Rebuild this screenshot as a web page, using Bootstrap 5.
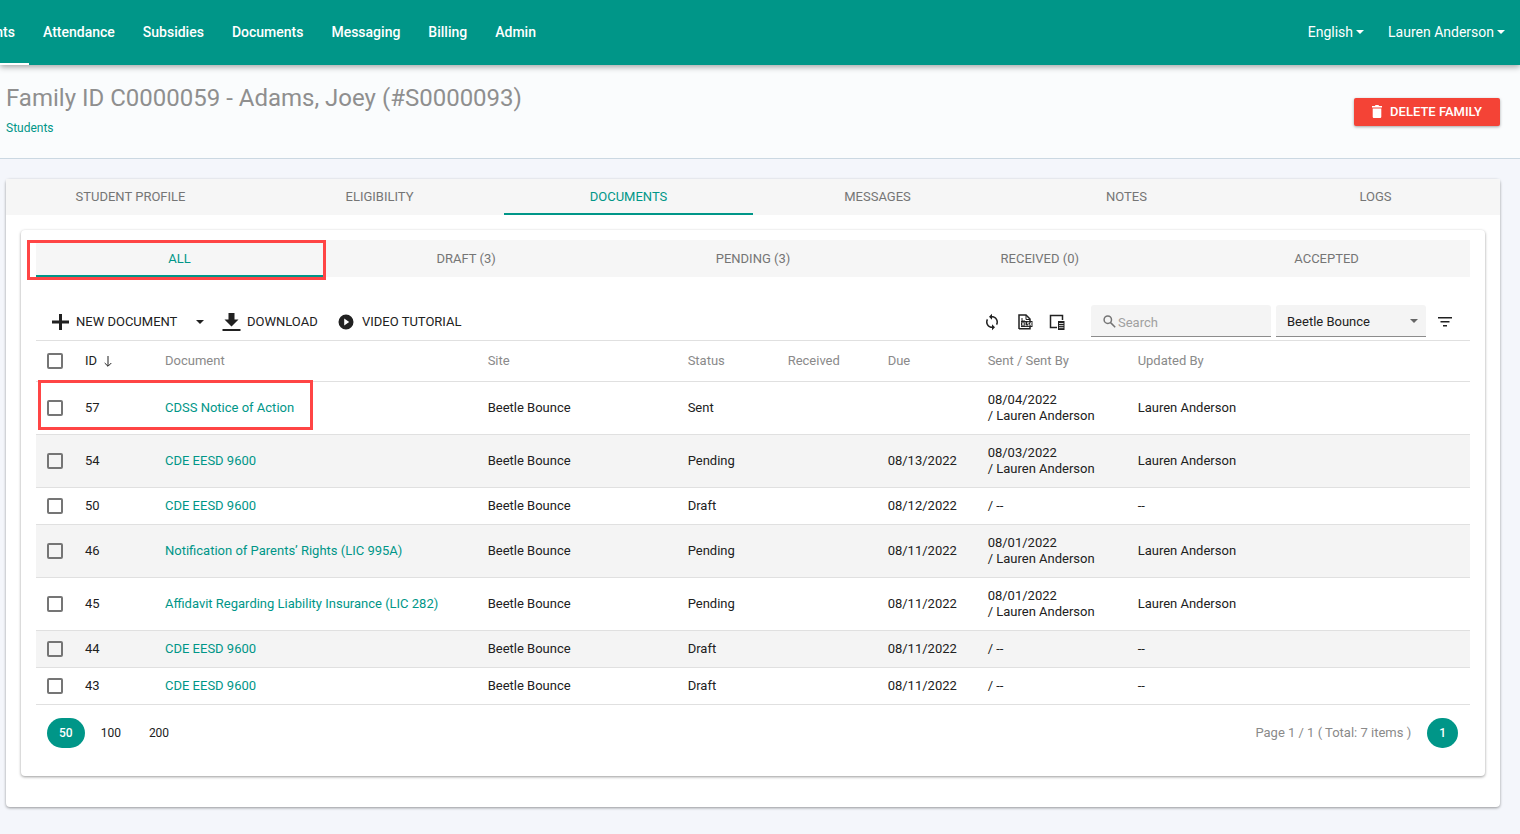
<!DOCTYPE html>
<html lang="en">
<head>
<meta charset="utf-8">
<meta name="viewport" content="width=device-width, initial-scale=1">
<title>Family documents</title>
<link rel="stylesheet" href="https://cdn.jsdelivr.net/npm/bootstrap@5.3.0/dist/css/bootstrap.min.css">
<style>
  :root { --teal: #009688; --ink: #212121; --soft: #757575; --line: #e0e0e0; }
  body { font-family: Roboto, "Liberation Sans", sans-serif; font-size: 13px; line-height: 16px; color: var(--ink); background: #f4f6fb; }
  a { color: var(--teal); text-decoration: none; }
  svg { display: block; fill: currentColor; flex: none; }
  .topbar { background: var(--teal); height: 65px; box-shadow: 0 2px 6px rgba(0,0,0,.35); position: relative; }
  .topbar .nav-link { color: #fff; font-size: 14px; font-weight: 500; line-height: 20px; padding: 22px 14px 21px; border-bottom: 2px solid transparent; }
  .main-menu { margin-left: -55px; }
  .topbar .nav-link.active { border-bottom-color: #fff; }
  .topbar .user-menu .nav-link { padding-left: 12px; padding-right: 12px; font-weight: 400; }
  .user-menu { margin-right: 3px; }
  .caret { display: inline-block; border: 4px solid transparent; border-top-color: currentColor; border-bottom: 0; vertical-align: 3px; margin-left: 3px; }
  .page-head { background: #fafcfd; border-bottom: 1px solid #cbd8e2; padding: 17px 20px 22px 6px; }
  .page-head h1 { font-size: 24px; font-weight: 400; line-height: 32px; color: #8f8f8f; margin-bottom: 6px; }
  .page-head .crumb { font-size: 12px; }
  .btn-delete { background: #f44336; color: #fff; font-size: 13px; font-weight: 500; line-height: 16px; padding: 6px 12px; border: 0; border-radius: 2px; box-shadow: 0 1px 3px rgba(0,0,0,.35); min-width: 146px; margin-top: 5px; }
  .btn-delete:hover { background: #e53935; color: #fff; }
  .panel { background: #fff; border-radius: 4px; box-shadow: 0 1px 3px rgba(0,0,0,.4); }
  .panel-outer { margin: 20px 20px 27px 6px; }
  .panel-inner { margin: 15px 15px 31px; padding: 10px 15px 28px; }
  .tab-strip { background: #f6f6f6; }
  .tab-strip .nav-link { color: var(--soft); border-bottom: 2px solid transparent; border-radius: 0; padding: 10px 0 8px; }
  .sub-tabs .nav-link { padding-top: 11px; }
  .tab-strip .nav-link.active { color: var(--teal); border-bottom-color: var(--teal); }
  .marker { position: absolute; border: 3px solid #ff4545; pointer-events: none; }
  .marker-tab { top: 0; bottom: -3px; left: -9px; right: -3px; }
  .marker-row { top: -2px; left: 2px; width: 275px; height: 50px; }
  .toolbar { margin-top: 28px; margin-bottom: 3px; padding-left: 16px; padding-right: 18px; }
  .tool-set { gap: 18px; }
  .tool { background: none; border: 0; padding: 2px 0 0; color: var(--ink); display: flex; align-items: center; }
  .tool-new { width: 152px; gap: 7px; }
  .tool-new .caret { margin-left: auto; }
  .tool-down { gap: 6px; width: 98px; }
  .field { background-color: #f4f4f4; border: 0; border-bottom: 1px solid #8c8c8c; border-radius: 3px 3px 0 0; height: 32px; font-size: 13px; line-height: 16px; color: var(--ink); }
  .search-wrap { width: 180px; position: relative; }
  .search-wrap svg { position: absolute; left: 12px; top: 10px; color: var(--soft); }
  .search-wrap .field { padding: 9px 8px 6px 27px; }
  .search-wrap .field::placeholder { color: #a0a0a0; }
  .site-pick { width: 150px; margin-left: 5px; padding: 9px 20px 6px 11px; background-size: 8px 4px; background-position: right 8px center;
    background-image: url("data:image/svg+xml,%3csvg xmlns='http://www.w3.org/2000/svg' viewBox='0 0 8 4'%3e%3cpath fill='%23666' d='M0 0h8L4 4z'/%3e%3c/svg%3e"); }
  .doc-table { table-layout: fixed; width: 100%; margin: 0 0 13px; border-top: 1px solid var(--line); --bs-table-bg: transparent; }
  .doc-table > :not(caption) > * > * { padding: 10px; border-bottom: 1px solid var(--line); color: var(--ink); vertical-align: middle; box-shadow: none; }
  .doc-table > :not(caption) > * > :first-child { padding: 0 0 0 11px; position: relative; }
  .doc-table > thead > tr > th { font-weight: 400; color: #8a8a8a; line-height: 20px; height: 41px; }
  .doc-table > tbody > tr:nth-child(even) { background: #f4f4f4; }
  .doc-table .form-check-input { display: block; width: 16px; height: 16px; margin: 0; border: 2px solid #757575; border-radius: 2px; background-color: transparent; }
  .doc-table .form-check-input:checked { background-color: var(--teal); border-color: var(--teal); }
  .c-check { width: 39px; } .c-id { width: 80px; } .c-doc { width: 22.5%; } .c-site { width: 200px; } .c-s { width: 100px; } .c-sent { width: 150px; }
  .sort { background: none; border: 0; padding: 0; color: var(--ink); display: flex; align-items: center; gap: 7px; }
  .pager { padding: 0 12px 0 11px; }
  .page-count { color: #8a8a8a; }
  .pill { border: 0; background: none; color: var(--ink); font-size: 12px; height: 30px; padding: 0 12px; border-radius: 15px; }
  .pill.active { background: var(--teal); color: #fff; font-weight: 500; }
</style>
</head>
<body>
<header class="topbar d-flex justify-content-between">
  <div class="overflow-hidden">
    <ul class="nav main-menu flex-nowrap">
      <li class="nav-item"><a class="nav-link active" aria-current="page" href="#">Students</a></li>
      <li class="nav-item"><a class="nav-link" href="#">Attendance</a></li>
      <li class="nav-item"><a class="nav-link" href="#">Subsidies</a></li>
      <li class="nav-item"><a class="nav-link" href="#">Documents</a></li>
      <li class="nav-item"><a class="nav-link" href="#">Messaging</a></li>
      <li class="nav-item"><a class="nav-link" href="#">Billing</a></li>
      <li class="nav-item"><a class="nav-link" href="#">Admin</a></li>
    </ul>
  </div>
  <ul class="nav user-menu flex-nowrap">
    <li class="nav-item"><a class="nav-link" href="#">English<span class="caret"></span></a></li>
    <li class="nav-item"><a class="nav-link" href="#">Lauren Anderson<span class="caret"></span></a></li>
  </ul>
</header>

<div class="page-head d-flex justify-content-between align-items-center">
  <div>
    <h1>Family ID C0000059 - Adams, Joey (#S0000093)</h1>
    <a class="crumb d-block" href="#">Students</a>
  </div>
  <button type="button" class="btn btn-delete d-flex align-items-center justify-content-center gap-2">
    <svg width="10" height="13" viewBox="0 0 10 13" aria-hidden="true"><path d="M.7 3.500h8.600v8.200c0 .7-.6 1.300-1.300 1.300H2c-.7 0-1.300-.6-1.300-1.300zM0 1h2.800l.8-1h2.800l.8 1H10v1.500H0z"/></svg>
    DELETE FAMILY
  </button>
</div>

<main class="panel panel-outer d-flex flex-column">
  <ul class="nav nav-justified tab-strip">
    <li class="nav-item"><a class="nav-link" href="#">STUDENT PROFILE</a></li>
    <li class="nav-item"><a class="nav-link" href="#">ELIGIBILITY</a></li>
    <li class="nav-item"><a class="nav-link active" href="#">DOCUMENTS</a></li>
    <li class="nav-item"><a class="nav-link" href="#">MESSAGES</a></li>
    <li class="nav-item"><a class="nav-link" href="#">NOTES</a></li>
    <li class="nav-item"><a class="nav-link" href="#">LOGS</a></li>
  </ul>

  <section class="panel panel-inner">
    <ul class="nav nav-justified tab-strip sub-tabs">
      <li class="nav-item position-relative"><a class="nav-link active" href="#">ALL</a><span class="marker marker-tab"></span></li>
      <li class="nav-item"><a class="nav-link" href="#">DRAFT (3)</a></li>
      <li class="nav-item"><a class="nav-link" href="#">PENDING (3)</a></li>
      <li class="nav-item"><a class="nav-link" href="#">RECEIVED (0)</a></li>
      <li class="nav-item"><a class="nav-link" href="#">ACCEPTED</a></li>
    </ul>

    <div class="toolbar d-flex align-items-center justify-content-between">
      <div class="tool-set d-flex align-items-center">
        <button type="button" class="tool tool-new">
          <svg width="17" height="16" viewBox="0 0 17 16" aria-hidden="true"><path d="M7 0h3v6.500h7v3h-7V16H7V9.500H0v-3h7z"/></svg>
          NEW DOCUMENT<span class="caret"></span>
        </button>
        <button type="button" class="tool tool-down">
          <svg width="19" height="18" viewBox="0 0 19 18" aria-hidden="true"><path d="M6.500 0h6v6.500h4L9.500 13.500l-7-7h4zM.5 16h18v2H.5z"/></svg>
          DOWNLOAD
        </button>
        <button type="button" class="tool gap-2">
          <svg width="16" height="16" viewBox="0 0 16 16" aria-hidden="true"><path fill-rule="evenodd" d="M8 .5a7.500 7.500 0 1 1 0 15 7.500 7.500 0 0 1 0-15zM6.200 4.600v6.800L11.200 8z"/></svg>
          VIDEO TUTORIAL
        </button>
      </div>
      <div class="d-flex align-items-center">
        <button type="button" class="tool me-3" aria-label="Refresh">
          <svg width="18" height="18" viewBox="0 0 24 24" aria-hidden="true"><path d="M12 4V1L8 5l4 4V6c3.310 0 6 2.690 6 6 0 1.010-.25 1.970-.7 2.800l1.460 1.460A7.930 7.930 0 0 0 20 12c0-4.420-3.580-8-8-8zm0 14c-3.310 0-6-2.690-6-6 0-1.010.25-1.970.7-2.800L5.240 7.740A7.930 7.930 0 0 0 4 12c0 4.420 3.580 8 8 8v3l4-4-4-4z"/></svg>
        </button>
        <button type="button" class="tool me-3" aria-label="Export to XLSX">
          <svg width="16" height="16" viewBox="0 0 16 16" aria-hidden="true"><path fill="none" stroke="currentColor" stroke-width="1.500" d="M2 15V1h7l4 4v3M2 14.700h11V13"/><path fill="none" stroke="currentColor" d="M9 1v4.500h4M5 4v3h3"/><path d="M4 7h11.500v6H4z"/><path fill="none" stroke="#fff" stroke-width=".8" d="M5 8.300l2 3.400M7 8.300l-2 3.400M8.200 8.200v3.400h1.500M12 8.400h-1.400v1.500h1.300v1.700h-1.400M13 8.300l1.600 3.400M14.600 8.300L13 11.700"/></svg>
        </button>
        <button type="button" class="tool" aria-label="Choose columns">
          <svg width="18" height="16" viewBox="0 0 18 16" aria-hidden="true"><path fill="none" stroke="currentColor" stroke-width="1.500" d="M8 13.500H1.500v-12h12V6"/><path d="M9 7h6.500v9H9z"/><path stroke="#fff" stroke-width=".8" d="M10 9.500h4.500M10 11.600h4.500M10 13.700h4.500"/></svg>
        </button>
        <div class="search-wrap ms-4">
          <svg width="13" height="13" viewBox="0 0 13 13" aria-hidden="true"><path fill="none" stroke="currentColor" stroke-width="1.500" d="M8.500 4.700a3.700 3.700 0 1 1-7.400 0 3.700 3.700 0 0 1 7.400 0zM7.600 7.600l4.600 4.600"/></svg>
          <input type="search" class="field w-100" placeholder="Search" aria-label="Search">
        </div>
        <select class="form-select field site-pick" aria-label="Site"><option>Beetle Bounce</option></select>
        <button type="button" class="tool ms-2 ps-1" aria-label="Filter">
          <svg width="14" height="10" viewBox="0 0 14 10" aria-hidden="true"><path d="M0 0h14v1.500H0zM2.500 4h9v1.500h-9zM5 8h4v1.500H5z"/></svg>
        </button>
      </div>
    </div>

    <table class="table doc-table">
      <colgroup><col class="c-check"><col class="c-id"><col class="c-doc"><col class="c-site"><col class="c-s"><col class="c-s"><col class="c-s"><col class="c-sent"><col></colgroup>
      <thead><tr>
        <th scope="col"><input class="form-check-input" type="checkbox" aria-label="Select all"></th>
        <th scope="col"><button type="button" class="sort">ID <svg width="8" height="11" viewBox="0 0 8 11" aria-hidden="true"><path fill="none" stroke="currentColor" d="M4 0v10M.7 7L4 10.300 7.300 7"/></svg></button></th>
        <th scope="col">Document</th><th scope="col">Site</th><th scope="col">Status</th><th scope="col">Received</th><th scope="col">Due</th><th scope="col">Sent / Sent By</th><th scope="col">Updated By</th>
      </tr></thead>
      <tbody>
        <tr><td><input class="form-check-input" type="checkbox" aria-label="Select 57"><span class="marker marker-row"></span></td><td>57</td><td><a href="#">CDSS Notice of Action</a></td><td>Beetle Bounce</td><td>Sent</td><td></td><td></td><td>08/04/2022<br>/ Lauren Anderson</td><td>Lauren Anderson</td></tr>
        <tr><td><input class="form-check-input" type="checkbox" aria-label="Select 54"></td><td>54</td><td><a href="#">CDE EESD 9600</a></td><td>Beetle Bounce</td><td>Pending</td><td></td><td>08/13/2022</td><td>08/03/2022<br>/ Lauren Anderson</td><td>Lauren Anderson</td></tr>
        <tr><td><input class="form-check-input" type="checkbox" aria-label="Select 50"></td><td>50</td><td><a href="#">CDE EESD 9600</a></td><td>Beetle Bounce</td><td>Draft</td><td></td><td>08/12/2022</td><td>/ --</td><td>--</td></tr>
        <tr><td><input class="form-check-input" type="checkbox" aria-label="Select 46"></td><td>46</td><td><a href="#">Notification of Parents’ Rights (LIC 995A)</a></td><td>Beetle Bounce</td><td>Pending</td><td></td><td>08/11/2022</td><td>08/01/2022<br>/ Lauren Anderson</td><td>Lauren Anderson</td></tr>
        <tr><td><input class="form-check-input" type="checkbox" aria-label="Select 45"></td><td>45</td><td><a href="#">Affidavit Regarding Liability Insurance (LIC 282)</a></td><td>Beetle Bounce</td><td>Pending</td><td></td><td>08/11/2022</td><td>08/01/2022<br>/ Lauren Anderson</td><td>Lauren Anderson</td></tr>
        <tr><td><input class="form-check-input" type="checkbox" aria-label="Select 44"></td><td>44</td><td><a href="#">CDE EESD 9600</a></td><td>Beetle Bounce</td><td>Draft</td><td></td><td>08/11/2022</td><td>/ --</td><td>--</td></tr>
        <tr><td><input class="form-check-input" type="checkbox" aria-label="Select 43"></td><td>43</td><td><a href="#">CDE EESD 9600</a></td><td>Beetle Bounce</td><td>Draft</td><td></td><td>08/11/2022</td><td>/ --</td><td>--</td></tr>
      </tbody>
    </table>

    <div class="pager d-flex justify-content-between align-items-center">
      <div class="d-flex gap-1">
        <button type="button" class="pill active">50</button>
        <button type="button" class="pill">100</button>
        <button type="button" class="pill">200</button>
      </div>
      <div class="d-flex align-items-center gap-3">
        <span class="page-count">Page 1 / 1 ( Total: 7 items )</span>
        <button type="button" class="pill active">1</button>
      </div>
    </div>
  </section>
</main>
<script src="https://cdn.jsdelivr.net/npm/bootstrap@5.3.0/dist/js/bootstrap.bundle.min.js"></script>
</body>
</html>
